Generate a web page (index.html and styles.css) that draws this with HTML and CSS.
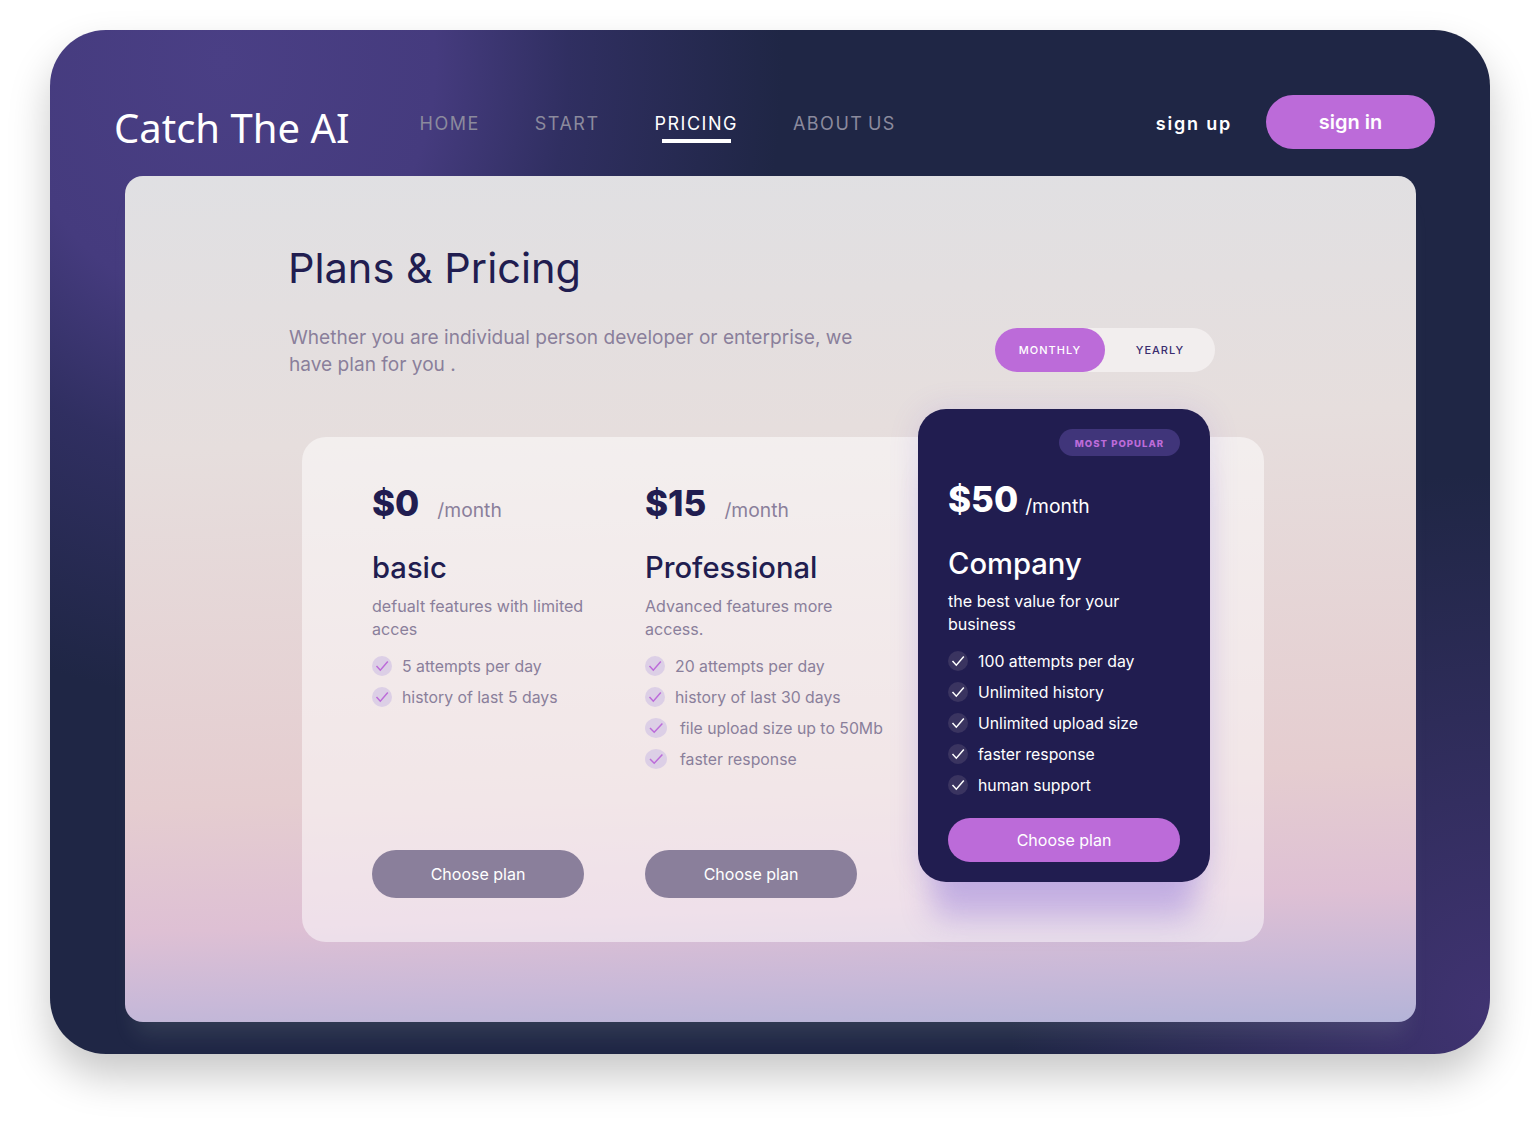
FILE: index.html
```html
<!DOCTYPE html>
<html lang="en">
<head>
  <meta charset="UTF-8" />
  <meta name="viewport" content="width=device-width, initial-scale=1.0"/>
  <title>Catch The AI - Pricing</title>
  <link rel="stylesheet" href="styles.css">
</head>
<body>

  <div class="frame">
    <header class="topbar">
      <a class="logo" href="#">Catch The AI</a>
      <nav class="nav">
        <a href="#">HOME</a>
        <a href="#">START</a>
        <a href="#" class="active">PRICING</a>
        <a href="#">ABOUT US</a>
      </nav>
      <div class="auth">
        <a class="sign-up" href="#">sign up</a>
        <a class="sign-in" href="#">sign in</a>
      </div>
    </header>

    <main class="panel">
      <h1 class="title">Plans &amp; Pricing</h1>
      <div class="intro">
        <p>Whether you are individual person developer or enterprise, we have plan for you .</p>
        <div class="toggle">
          <span class="on">MONTHLY</span>
          <span>YEARLY</span>
        </div>
      </div>

      <section class="plans">
        <article class="plan">
          <div class="price"><b>$0</b><span class="per">/month</span></div>
          <h2>basic</h2>
          <p class="desc">defualt features with limited acces</p>
          <ul class="features">
            <li><svg class="tick" viewBox="0 0 20 20"><circle cx="10" cy="10" r="10"/><path d="M4.5 10l3.8 4.2 7.5-8.6"/></svg>5 attempts per day</li>
            <li><svg class="tick" viewBox="0 0 20 20"><circle cx="10" cy="10" r="10"/><path d="M4.5 10l3.8 4.2 7.5-8.6"/></svg>history of last 5 days</li>
          </ul>
          <a class="choose" href="#">Choose plan</a>
        </article>

        <article class="plan">
          <div class="price"><b>$15</b><span class="per">/month</span></div>
          <h2>Professional</h2>
          <p class="desc">Advanced features more access.</p>
          <ul class="features">
            <li><svg class="tick" viewBox="0 0 20 20"><circle cx="10" cy="10" r="10"/><path d="M4.5 10l3.8 4.2 7.5-8.6"/></svg>20 attempts per day</li>
            <li><svg class="tick" viewBox="0 0 20 20"><circle cx="10" cy="10" r="10"/><path d="M4.5 10l3.8 4.2 7.5-8.6"/></svg>history of last 30 days</li>
            <li class="wide"><svg class="tick" viewBox="0 0 22 20"><ellipse cx="11" cy="10" rx="11" ry="10"/><path d="M5 10l4.2 4.2 8.2-8.6"/></svg>file upload size up to 50Mb</li>
            <li class="wide"><svg class="tick" viewBox="0 0 22 20"><ellipse cx="11" cy="10" rx="11" ry="10"/><path d="M5 10l4.2 4.2 8.2-8.6"/></svg>faster response</li>
          </ul>
          <a class="choose" href="#">Choose plan</a>
        </article>

        <article class="plan featured">
          <span class="badge">MOST POPULAR</span>
          <div class="price"><b>$50</b><span class="per">/month</span></div>
          <h2>Company</h2>
          <p class="desc">the best value for your business</p>
          <ul class="features">
            <li><svg class="tick" viewBox="0 0 20 20"><circle cx="10" cy="10" r="10"/><path d="M4.5 10l3.8 4.2 7.5-8.6"/></svg>100 attempts per day</li>
            <li><svg class="tick" viewBox="0 0 20 20"><circle cx="10" cy="10" r="10"/><path d="M4.5 10l3.8 4.2 7.5-8.6"/></svg>Unlimited history</li>
            <li><svg class="tick" viewBox="0 0 20 20"><circle cx="10" cy="10" r="10"/><path d="M4.5 10l3.8 4.2 7.5-8.6"/></svg>Unlimited upload size</li>
            <li><svg class="tick" viewBox="0 0 20 20"><circle cx="10" cy="10" r="10"/><path d="M4.5 10l3.8 4.2 7.5-8.6"/></svg>faster response</li>
            <li><svg class="tick" viewBox="0 0 20 20"><circle cx="10" cy="10" r="10"/><path d="M4.5 10l3.8 4.2 7.5-8.6"/></svg>human support</li>
          </ul>
          <a class="choose" href="#">Choose plan</a>
        </article>
      </section>
    </main>
  </div>

</body>
</html>
```

FILE: styles.css
```css
:root {
  --navy: #211d50;
  --muted: #8a7f9b;
  --purple: #bc6bd9;
}

* {
  box-sizing: border-box;
}

body {
  margin: 0;
  background: #fff;
  font-family: 'Inter', sans-serif;
}

a {
  color: inherit;
  text-decoration: none;
}

.frame {
  width: 1440px;
  height: 1024px;
  margin: 30px 0 70px 50px;
  border-radius: 56px;
  background:
    radial-gradient(ellipse 480px 540px at 100% 96%, rgba(66, 52, 116, 0.95), rgba(66, 52, 116, 0) 100%),
    radial-gradient(ellipse 560px 640px at 12% 3%, #4a3f85 0%, #453b7e 38%, rgba(52, 49, 104, 0.8) 62%, rgba(31, 39, 69, 0) 100%),
    #1f2645;
  box-shadow: 0 22px 42px rgba(0, 0, 0, 0.22);
}

.topbar {
  display: flex;
  align-items: center;
  height: 146px;
  padding: 65px 55px 27px 64px;
  color: #fff;
}

.logo {
  font-family: 'Noto Sans', sans-serif;
  font-size: 40px;
  line-height: 54px;
  margin-top: 12px;
}

.nav {
  display: flex;
  gap: 55px;
  margin-top: 4px;
  margin-left: 70px;
}

.nav a {
  position: relative;
  font-size: 18px;
  line-height: 24px;
  letter-spacing: 1.5px;
  word-spacing: -2px;
  color: #8b8a9d;
}

.nav a.active {
  color: #fff;
}

.nav a.active::after {
  content: "";
  position: absolute;
  left: 7px;
  width: 69px;
  top: 27px;
  height: 4px;
  background: #fff;
}

.auth {
  display: flex;
  align-items: center;
  gap: 34px;
  margin-left: auto;
}

.sign-up {
  margin-top: 2px;
  font-size: 18px;
  font-weight: 600;
  letter-spacing: 1.8px;
}

.sign-in {
  display: flex;
  align-items: center;
  justify-content: center;
  width: 169px;
  height: 54px;
  border-radius: 27px;
  background: var(--purple);
  font-size: 20px;
  font-weight: 600;
}

.panel {
  height: 846px;
  margin: 0 74px 0 75px;
  padding-top: 62px;
  border-radius: 18px;
  background: linear-gradient(178deg, #e0e0e3 0%, #e6dedd 31%, #e5cdd0 71%, #dec0d4 85%, #c9b9d8 93%, #b4b4d8 100%);
  box-shadow: 0 22px 22px -10px rgba(200, 225, 200, 0.12);
}

.title {
  margin: 0 0 26px 163px;
  font-size: 41.5px;
  line-height: 60px;
  font-weight: 400;
  color: var(--navy);
}

.intro {
  display: flex;
  align-items: center;
  justify-content: space-between;
  padding: 0 201px 0 164px;
}

.intro p {
  width: 580px;
  margin: 0;
  font-size: 19.1px;
  line-height: 27px;
  color: var(--muted);
}

.toggle {
  display: flex;
  width: 220px;
  height: 44px;
  margin-top: -2px;
  border-radius: 22px;
  background: #f2eeee;
  color: #3a2d6e;
  font-size: 11px;
  font-weight: 500;
  letter-spacing: 1px;
}

.toggle span {
  display: flex;
  align-items: center;
  justify-content: center;
  width: 110px;
  border-radius: 22px;
}

.toggle .on {
  background: var(--purple);
  color: #fff;
}

.plans {
  display: flex;
  gap: 61px;
  height: 505px;
  margin: 59px 152px 0 177px;
  padding: 0 54px 0 70px;
  border-radius: 24px;
  background: rgba(255, 255, 255, 0.5);
}

.plan {
  display: flex;
  flex-direction: column;
  width: 212px;
  padding: 44px 0;
  color: var(--navy);
}

.price {
  height: 44px;
  line-height: 44px;
  white-space: nowrap;
}

.price b {
  font-size: 35px;
  font-weight: 800;
}

.per {
  margin-left: 18px;
  font-size: 19.3px;
  vertical-align: -1px;
  color: var(--muted);
}

.plan h2 {
  margin: 23px 0 0;
  font-size: 29.2px;
  line-height: 39px;
  font-weight: 500;
}

.desc {
  margin: 8px 0 0;
  font-size: 16.1px;
  line-height: 23px;
  color: var(--muted);
}

.features {
  list-style: none;
  margin: 15px 0 0;
  padding: 0;
  display: flex;
  flex-direction: column;
  gap: 11px;
  white-space: nowrap;
}

.features li {
  display: flex;
  align-items: center;
  gap: 10px;
  height: 20px;
  font-size: 15.8px;
  color: var(--muted);
}

.features li.wide {
  gap: 13px;
}

.tick {
  width: 20px;
  height: 20px;
  flex: none;
}

.wide .tick {
  width: 22px;
}

.tick circle,
.tick ellipse {
  fill: #dccfe6;
}

.tick path {
  fill: none;
  stroke: var(--purple);
  stroke-width: 1.5;
}

.choose {
  display: flex;
  align-items: center;
  justify-content: center;
  height: 48px;
  margin-top: auto;
  border-radius: 24px;
  background: var(--muted);
  color: #fff;
  font-size: 16px;
}

.featured {
  width: 292px;
  height: 473px;
  margin-top: -28px;
  padding: 20px 30px;
  border-radius: 28px;
  background: var(--navy);
  color: #fff;
  box-shadow: 0 50px 30px -14px rgba(120, 90, 215, 0.34), 0 0 30px rgba(130, 100, 220, 0.16);
}

.badge {
  align-self: flex-end;
  width: 121px;
  height: 27px;
  border-radius: 14px;
  background: #40357a;
  color: var(--purple);
  font-size: 9.6px;
  font-weight: 800;
  letter-spacing: 1px;
  line-height: 29px;
  text-align: center;
}

.featured .price {
  margin-top: 21px;
}

.featured .per {
  margin-left: 7px;
  color: #fff;
}

.featured h2 {
  margin-top: 23px;
  width: 232px;
}

.featured .desc {
  margin-top: 7px;
  color: #fff;
}

.featured .features li {
  color: #fff;
}

.featured .tick circle {
  fill: #3a3460;
}

.featured .tick path {
  stroke: #fff;
}

.featured .choose {
  height: 44px;
  border-radius: 22px;
  background: var(--purple);
}
```
